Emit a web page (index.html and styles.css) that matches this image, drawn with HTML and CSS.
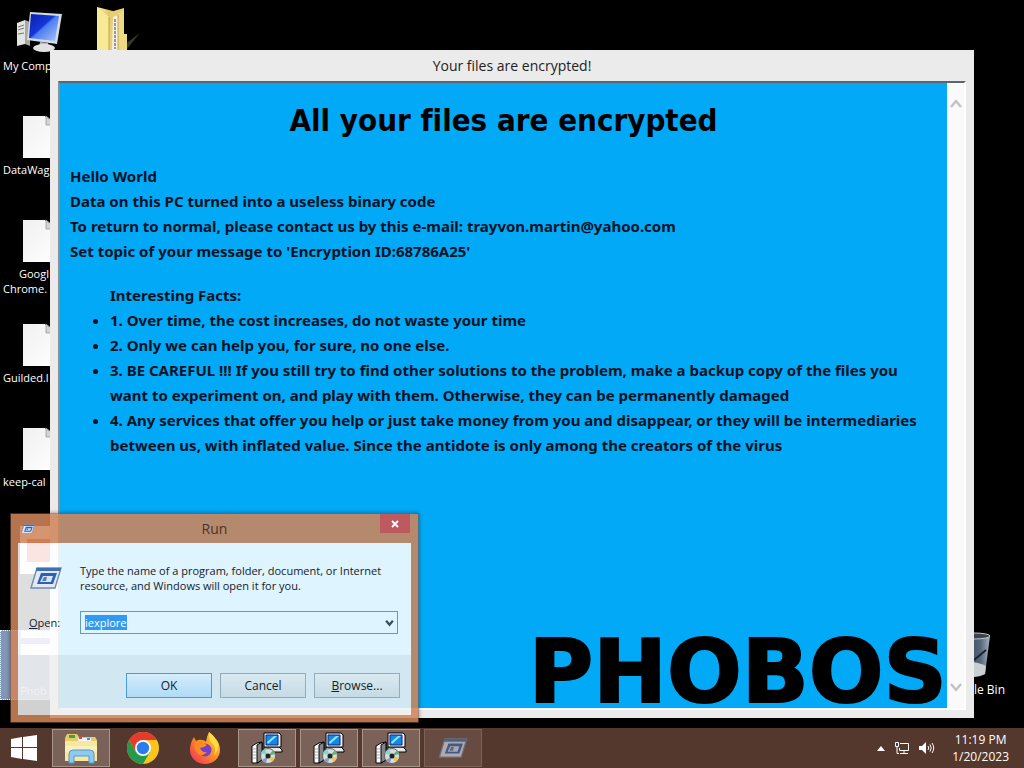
FILE: index.html
```html
<!DOCTYPE html>
<html lang="en">
<head>
  <meta charset="UTF-8">
  <meta name="viewport" content="width=device-width, initial-scale=1.0">
  <title>Your files are encrypted!</title>
  <link rel="stylesheet" href="styles.css">
</head>
<body>
  <svg class="defs" width="0" height="0" aria-hidden="true">
    <defs>
      <linearGradient id="screen" x1="0" y1="0" x2="1" y2="1">
        <stop offset="0" stop-color="#0a1fb0"/>
        <stop offset=".45" stop-color="#1437d8"/>
        <stop offset=".5" stop-color="#4d7df0"/>
        <stop offset="1" stop-color="#a9c9fb"/>
      </linearGradient>
      <linearGradient id="folder" x1="0" y1="0" x2="1" y2="0">
        <stop offset="0" stop-color="#fbf0a8"/>
        <stop offset="1" stop-color="#d9b95a"/>
      </linearGradient>
      <linearGradient id="flame" x1="1" y1="0" x2="0" y2="1">
        <stop offset="0" stop-color="#ffe14a"/>
        <stop offset=".5" stop-color="#ff8b22"/>
        <stop offset="1" stop-color="#f0246a"/>
      </linearGradient>
      <linearGradient id="paper" x1="0" y1="0" x2="1" y2="1">
        <stop offset="0" stop-color="#f0f0f0"/>
        <stop offset="1" stop-color="#ffffff"/>
      </linearGradient>
      <linearGradient id="glass" x1="0" y1="0" x2="1" y2="0">
        <stop offset="0" stop-color="#2a3440"/>
        <stop offset=".7" stop-color="#56677c"/>
        <stop offset="1" stop-color="#a5b1bd"/>
      </linearGradient>
      <symbol id="file" viewBox="0 0 34 42">
        <path d="M0 0H22L31 9H34V42H0Z" fill="url(#paper)"/>
        <path d="M23 0V9H34Z" fill="#d4d4d4" stroke="#9a9a9a" stroke-width=".8"/>
      </symbol>
      <symbol id="run" viewBox="0 0 32 22">
        <path d="M7 1H31L25 21H1Z" fill="#e3e9f3" stroke="#6f8ab3" stroke-width="1.4"/>
        <path d="M6 1H31L30 4H6Z" fill="#3f6fb5"/>
        <path d="M11 6H27L23 17H7Z" fill="#2b62b4"/>
        <path d="M13 9H23L21 15H10Z" fill="#d7e3f3"/>
        <path d="M14 10H17L16 14H12Z" fill="#5b7cac"/>
      </symbol>
      <symbol id="setup" viewBox="0 0 32 32">
        <path d="M1 14L6 11L11 10V28L6 31H1Z" fill="#fff" stroke="#000"/>
        <path d="M6 13L11 10V28L6 31Z" fill="#858585" stroke="#000"/>
        <path d="M2 17H5M2 20H5M2 23H5M2 26H5" stroke="#aaa"/>
        <path d="M13 15H28L31 18V20H13Z" fill="#e7e7e7" stroke="#000"/>
        <path d="M13 1H28L30 3V15H13Z" fill="#f0f0f0" stroke="#000"/>
        <path d="M15 3H27V13H15Z" fill="#1689dd" stroke="#0b2596"/>
        <path d="M16 10L23 4H26L17 12Z" fill="#8ce5ff"/>
        <circle cx="17" cy="24" r="7.5" fill="#d9dde0" stroke="#666"/>
        <path d="M17 24L10 21A7 7 0 0 1 14 17Z" fill="#7fd9c9"/>
        <path d="M17 24L24 26A7 7 0 0 1 20 30Z" fill="#e7c95a"/>
        <path d="M17 24L22 18A7 7 0 0 1 24 22Z" fill="#6fae7b"/>
        <path d="M17 24L11 28A7 7 0 0 0 15 31Z" fill="#8b9fc4"/>
        <circle cx="17" cy="24" r="2.5" fill="#222"/>
      </symbol>
    </defs>
  </svg>

  <main class="desktop">
    <ul class="icons">
      <li class="icon">
        <svg class="pic computer" viewBox="0 0 46 42">
          <path d="M1 13L9 10V34L1 36Z" fill="#e4e4e0"/>
          <path d="M9 10L14 12V36L9 34Z" fill="#a8a8a4"/>
          <path d="M2 17L8 15M2 20L8 18M2 24L8 23" stroke="#77776f"/>
          <path d="M14 2L46 4L41 34L11 30Z" fill="#d5dbe2"/>
          <path d="M15 4L43 6L39 31L13 28Z" fill="url(#screen)"/>
          <path d="M24 32L32 33L33 38H23Z" fill="#b9bcc0"/>
          <ellipse cx="28" cy="38" rx="11" ry="4" fill="#dfe1e3"/>
        </svg>
        <span class="name">My Comp</span>
      </li>
      <li class="icon">
        <svg class="pic"><use href="#file"/></svg>
        <span class="name">DataWag</span>
      </li>
      <li class="icon">
        <svg class="pic"><use href="#file"/></svg>
        <span class="name chrome-name">Googl<br>Chrome.</span>
      </li>
      <li class="icon">
        <svg class="pic"><use href="#file"/></svg>
        <span class="name">Guilded.l</span>
      </li>
      <li class="icon">
        <svg class="pic"><use href="#file"/></svg>
        <span class="name">keep-cal</span>
      </li>
      <li class="icon">
        <svg class="pic doc" viewBox="0 0 34 48">
          <path d="M0 0H34V48H0Z" fill="#fff"/>
          <path d="M7 13H34V36H7Z" fill="#e0382c"/>
        </svg>
      </li>
      <li class="icon selected">
        <svg class="pic doc" viewBox="0 0 34 48">
          <path d="M0 0H34V24H0Z" fill="#fff"/>
          <path d="M0 7H34V13H0Z" fill="#7c7ce0"/>
        </svg>
        <span class="name chrome-name">Phob</span>
      </li>
    </ul>

    <svg class="folder" viewBox="0 0 44 44">
      <path d="M28 38L44 26L30 43Z" fill="#333a2e"/>
      <path d="M1 0L17 4V44H1Z" fill="url(#folder)"/>
      <path d="M14 5L28 1V44H12Z" fill="#e6cf77"/>
      <path d="M17 10L22 8V44H16Z" fill="#f4f0e4"/>
      <path d="M19 12V42" stroke="#9b91a8" stroke-width="2" stroke-dasharray="3 1"/>
      <path d="M22 7L28 3V27H31V44H22Z" fill="#eddb83"/>
      <path d="M1 0L13 10V44H1Z" fill="#f7e996"/>
      <path d="M13 10V44M22 8V44" stroke="#b8983f" stroke-width=".8"/>
    </svg>

    <div class="bin">
      <svg class="bin-pic" viewBox="0 0 36 46">
        <path d="M2 4H34L29 42Q18 48 7 42Z" fill="url(#glass)"/>
        <path d="M5 32Q16 27 30 34L29 42Q18 48 7 42Z" fill="#c9cfd2"/>
        <path d="M18 28L30 18" stroke="#1b232e" stroke-width="2"/>
        <ellipse cx="18" cy="4" rx="16" ry="3" fill="#3b4450" stroke="#c3c9ce"/>
      </svg>
      <span class="bin-name">Recycle Bin</span>
    </div>

    <section class="window">
      <header class="window-title">Your files are encrypted!</header>
      <div class="frame">
        <article class="page">
          <h1>All your files are encrypted</h1>
          <p>
            Hello World<br>
            Data on this PC turned into a useless binary code<br>
            To return to normal, please contact us by this e-mail: trayvon.martin@yahoo.com<br>
            Set topic of your message to 'Encryption ID:68786A25'
          </p>
          <div class="facts">
            Interesting Facts:
            <ul>
              <li>1. Over time, the cost increases, do not waste your time</li>
              <li>2. Only we can help you, for sure, no one else.</li>
              <li>3. BE CAREFUL !!! If you still try to find other solutions to the problem, make a backup copy of the files you want to experiment on, and play with them. Otherwise, they can be permanently damaged</li>
              <li>4. Any services that offer you help or just take money from you and disappear, or they will be intermediaries between us, with inflated value. Since the antidote is only among the creators of the virus</li>
            </ul>
          </div>
          <div class="brand">PHOBOS</div>
        </article>
        <div class="scrollbar">
          <svg class="arrow" viewBox="0 0 12 10"><path d="M1 8L6 2L11 8" fill="none" stroke="#c2c2c2" stroke-width="2.4"/></svg>
          <svg class="arrow" viewBox="0 0 12 10"><path d="M1 2L6 8L11 2" fill="none" stroke="#c2c2c2" stroke-width="2.4"/></svg>
        </div>
      </div>
    </section>

    <form class="run">
      <header class="run-title">
        <svg class="run-small"><use href="#run"/></svg>
        <span class="run-name">Run</span>
        <button type="button" class="close" aria-label="Close">
          <svg viewBox="0 0 8 8" width="8" height="8"><path d="M1 1L7 7M7 1L1 7" stroke="#fff" stroke-width="1.8"/></svg>
        </button>
      </header>
      <div class="run-body">
        <svg class="run-icon"><use href="#run"/></svg>
        <p class="run-text">Type the name of a program, folder, document, or Internet resource, and Windows will open it for you.</p>
        <label class="run-label" for="command"><u>O</u>pen:</label>
        <div class="combo">
          <select id="command">
            <button><span class="picked">iexplore</span></button>
            <option>iexplore</option>
          </select>
          <svg class="combo-arrow" viewBox="0 0 8 6"><path d="M1 1L4 4.5L7 1" fill="none" stroke="#3d4c57" stroke-width="2"/></svg>
        </div>
      </div>
      <footer class="run-buttons">
        <button type="button" class="default">OK</button>
        <button type="button">Cancel</button>
        <button type="button"><u>B</u>rowse...</button>
      </footer>
    </form>
  </main>

  <nav class="taskbar">
    <button class="start" aria-label="Start">
      <svg width="26" height="26" viewBox="0 0 26 26" fill="#fff">
        <path d="M0 4L11 2V12H0ZM12 2L26 0V12H12ZM0 13H11V24L0 22ZM12 13H26V26L12 24Z"/>
      </svg>
    </button>
    <button class="task open" aria-label="File Explorer">
      <svg width="34" height="32" viewBox="0 0 34 32">
        <path d="M1 6L3 2H13L15 5H31L33 8V28H1Z" fill="#e8c968"/>
        <path d="M5 3H11V6H5Z" fill="#3aa14d"/>
        <path d="M14 6H27V9H14Z" fill="#f5f5f5"/>
        <path d="M15 4H18V7H15Z" fill="#d14a3a"/>
        <path d="M23 6H26V8H23Z" fill="#3f8ed0"/>
        <path d="M1 9H33V29H1Z" fill="#f8e79e"/>
        <path d="M1 14H33V20H1Z" fill="#fbf0ba"/>
        <path d="M5 31V22Q5 18 9 18H26Q30 18 30 22V31H25V24H10V31Z" fill="#8fc9ef" stroke="#4a9bd2"/>
      </svg>
    </button>
    <button class="task" aria-label="Google Chrome">
      <svg width="32" height="32" viewBox="0 0 32 32">
        <circle cx="16" cy="16" r="16" fill="#f9c51d"/>
        <path d="M2.1 8A16 16 0 0 0 16 32L23 20L16 16L9 20Z" fill="#269a4b"/>
        <path d="M2.1 8A16 16 0 0 1 29.9 8H16L9 20Z" fill="#e33b2e"/>
        <circle cx="16" cy="16" r="8" fill="#fff"/>
        <circle cx="16" cy="16" r="6.2" fill="#2b7bea"/>
      </svg>
    </button>
    <button class="task" aria-label="Firefox">
      <svg width="32" height="32" viewBox="0 0 32 32">
        <path d="M20 0Q24 4 25 8L27 7Q31 12 31 18A15 14 0 0 1 1 18Q1 11 5 5L7 9Q10 7 13 8Q16 8 17 10Q18 4 20 0Z" fill="url(#flame)"/>
        <circle cx="16" cy="18" r="6.5" fill="#7140cc"/>
        <path d="M5 11Q10 8 15 11L18 13Q15 16 11 16Q13 21 18 20Q14 25 9 22Q5 18 5 11Z" fill="#ff8a22"/>
        <path d="M20 0Q19 7 23 11Q28 16 25 23Q30 19 29 12Q27 5 20 0Z" fill="#ffdc3f"/>
      </svg>
    </button>
    <button class="task open" aria-label="Setup"><svg width="32" height="32"><use href="#setup"/></svg></button>
    <button class="task open" aria-label="Setup"><svg width="32" height="32"><use href="#setup"/></svg></button>
    <button class="task open" aria-label="Setup"><svg width="32" height="32"><use href="#setup"/></svg></button>
    <button class="task open faded" aria-label="Run"><svg width="30" height="20"><use href="#run"/></svg></button>
    <div class="tray">
      <svg width="8" height="5" viewBox="0 0 8 5"><path d="M4 0L8 5H0Z" fill="#fff"/></svg>
      <svg width="16" height="14" viewBox="0 0 16 14" fill="none" stroke="#fff">
        <path d="M6 2.5H14.500V9.500H5.500V7M10 9.500V12.500M6 12.500H14"/>
        <path d="M1.500 1.500H4.500V5.500H1.500ZM3 6V12.500H5"/>
      </svg>
      <svg width="16" height="14" viewBox="0 0 16 14">
        <path d="M0 5H3L7 1V13L3 9H0Z" fill="#fff"/>
        <path d="M9 5Q10.500 7 9 9M11 3.500Q13.500 7 11 10.500M13 2Q16.500 7 13 12" fill="none" stroke="#fff"/>
      </svg>
      <div class="clock">11:19 PM<br>1/20/2023</div>
    </div>
  </nav>
</body>
</html>
```
FILE: styles.css
```css
* {
  box-sizing: border-box;
}
body {
  margin: 0;
  height: 100vh;
  display: flex;
  flex-direction: column;
  overflow: hidden;
  background: #000;
  font-family: "Open Sans", "Noto Sans", sans-serif;
  font-size: 12px;
}
button {
  font: inherit;
  padding: 0;
}
.defs {
  position: absolute;
}
.desktop {
  flex: 1;
  position: relative;
  min-height: 0;
}

/* desktop icons */
.icons {
  list-style: none;
  margin: 0;
  padding: 6px 0 0;
  width: 50px;
  font-size: 11px;
  color: #fff;
}
.icon {
  height: 104px;
  display: flex;
  flex-direction: column;
}
.pic {
  width: 34px;
  height: 42px;
  margin: 6px 0 4px 23px;
  flex: none;
}
.pic.computer {
  width: 46px;
  margin: 4px 0 6px 16px;
}
.pic.doc {
  height: 48px;
  margin: 0 0 4px 20px;
}
.name {
  padding-left: 3px;
  line-height: 15px;
  white-space: nowrap;
}
.chrome-name {
  text-indent: 16px;
}
.selected {
  height: 70px;
  background: #8097b8;
  border: 1px dotted #fff;
}
.folder {
  position: absolute;
  left: 96px;
  top: 7px;
  width: 44px;
  height: 44px;
}
.bin {
  position: absolute;
  right: 19px;
  bottom: 31px;
  display: flex;
  flex-direction: column;
  align-items: center;
  gap: 4px;
  color: #fff;
  line-height: 15px;
}
.bin-pic {
  width: 36px;
  height: 46px;
}

/* message window */
.window {
  position: absolute;
  inset: 50px 50px 10px;
  display: flex;
  flex-direction: column;
  padding: 0 8px 8px;
  background: #ebebeb;
}
.window-title {
  height: 31px;
  line-height: 31px;
  text-align: center;
  font-size: 14px;
  color: #222;
}
.frame {
  flex: 1;
  display: flex;
  min-height: 0;
  border: 2px solid #fff;
  border-top-color: #5d6670;
  border-left-color: #8a8f94;
}
.page {
  flex: 1;
  display: flex;
  flex-direction: column;
  padding: 0 10px;
  background: #02a9f7;
  color: #001325;
  font-family: "Noto Sans", "DejaVu Sans", sans-serif;
  font-weight: bold;
  font-size: 15px;
  line-height: 25px;
  font-variant-ligatures: none;
}
.page h1 {
  margin: 17px 0 24px;
  font-family: "DejaVu Sans Condensed", "DejaVu Sans", sans-serif;
  font-size: 31px;
  line-height: 40px;
  text-align: center;
  color: #000;
}
.page p {
  margin: 0 0 19px;
}
.facts {
  padding-left: 40px;
}
.facts ul {
  margin: 0;
  padding: 0;
}
.brand {
  margin: auto -10px 0 0;
  align-self: flex-end;
  font-family: "DejaVu Sans", sans-serif;
  font-size: 88px;
  line-height: 72px;
  color: #000;
  -webkit-text-stroke: 2px #000;
}
.scrollbar {
  width: 17px;
  display: flex;
  flex-direction: column;
  justify-content: space-between;
  align-items: center;
  padding: 16px 0;
  background: #fafafa;
}
.arrow {
  width: 12px;
  height: 10px;
}

/* run dialog */
.run {
  position: absolute;
  left: 10px;
  bottom: 5px;
  width: 409px;
  padding: 0 8px 7px;
  background: none;
  border: 1px solid rgba(120, 75, 50, 0.6);
  box-shadow: 0 0 4px rgba(0, 0, 0, 0.4);
}
.run::before {
  content: "";
  position: absolute;
  inset: 0;
  border: solid rgba(208, 132, 90, 0.87);
  border-width: 29px 7px 7px;
}
.run > * {
  position: relative;
}
.run-title {
  height: 29px;
  display: grid;
  grid-template-columns: 30px 1fr 30px;
  align-items: center;
}
.run-small {
  width: 14px;
  height: 10px;
  margin-left: 2px;
}
.run-name {
  font-size: 14px;
  text-align: center;
  color: #4b342a;
}
.close {
  align-self: flex-start;
  width: 30px;
  height: 19px;
  border: 0;
  background: #bd5a5f;
}
.run-body {
  display: grid;
  grid-template-columns: 50px 1fr;
  column-gap: 12px;
  row-gap: 18px;
  align-items: center;
  margin: 0 -1px;
  padding: 20px 13px 21px 0;
  background: rgba(255, 255, 255, 0.87);
  color: #14212b;
}
.run-icon {
  width: 32px;
  height: 22px;
  margin-left: 12px;
}
.run-text {
  margin: 0;
  font-size: 11px;
  line-height: 15px;
}
.run-label {
  padding-left: 11px;
  font-size: 11px;
}
.combo {
  position: relative;
  display: flex;
}
.combo select,
.combo select::picker(select) {
  appearance: base-select;
}
.combo select {
  width: 100%;
  height: 23px;
  min-height: 0;
  padding: 0 4px;
  align-items: center;
  border: 1px solid #5f9dbd;
  border-radius: 0;
  background: transparent;
  font-size: 11px;
  font-family: inherit;
  line-height: 15px;
  color: #fff;
}
.combo select::picker-icon {
  display: none;
}
.picked {
  background: #3399f0;
}
.combo-arrow {
  position: absolute;
  right: 4px;
  top: 8px;
  width: 9px;
  height: 8px;
  pointer-events: none;
}
.run-buttons {
  display: flex;
  justify-content: flex-end;
  gap: 8px;
  margin: 0 -1px;
  padding: 18px 11px 17px;
  background: rgba(240, 240, 240, 0.87);
}
.run-buttons button {
  width: 86px;
  height: 25px;
  border: 1px solid #93adb8;
  background: linear-gradient(#d9e9f1, #c6dbe5);
  color: #14212b;
}
.run-buttons .default {
  border-color: #4a9cd6;
  background: linear-gradient(#d5ecfb, #b0dbf7);
}

/* taskbar */
.taskbar {
  height: 40px;
  display: flex;
  align-items: center;
  gap: 4px;
  background: #54382d;
  color: #fff;
}
.start,
.task {
  height: 38px;
  border: 0;
  background: none;
  display: flex;
  align-items: center;
  justify-content: center;
}
.start {
  width: 48px;
}
.task {
  width: 58px;
}
.task.open {
  background: #7a6258;
  border: 1px solid #a8958c;
}
.task.faded {
  background: #674b40;
  border-color: #7c6256;
}
.faded svg {
  opacity: 0.6;
}
.tray {
  margin-left: auto;
  display: flex;
  align-items: center;
  gap: 9px;
  padding-right: 15px;
}
.clock {
  margin-left: 8px;
  line-height: 17px;
  text-align: center;
}
```
